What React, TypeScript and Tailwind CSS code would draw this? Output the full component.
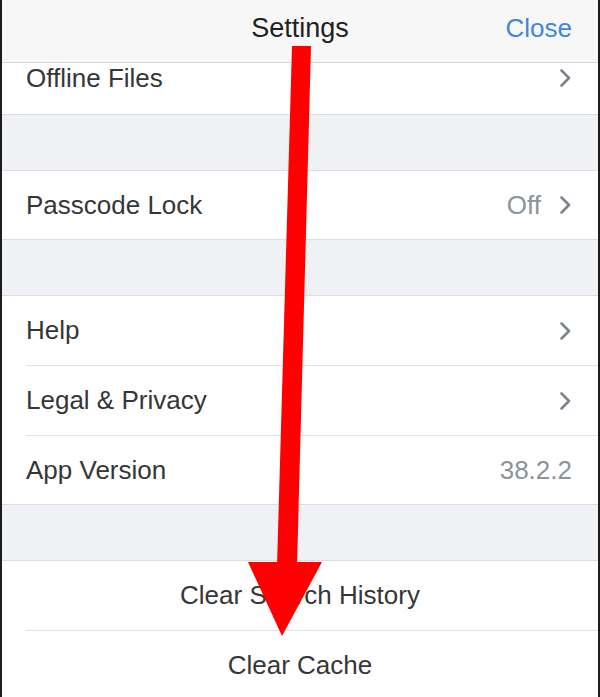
import React from 'react'

const font = { fontFamily: '"Liberation Sans", Arial, sans-serif' }

function Chevron() {
  return (
    <svg width="13" height="20" viewBox="0 0 13 20" className="shrink-0">
      <polyline points="2.5,2.5 10,10 2.5,17.5" fill="none" stroke="#7b838d" strokeWidth="2.6" strokeLinecap="round" strokeLinejoin="round" />
    </svg>
  )
}

function Row({ label, value, chevron, last }: { label: string; value?: string; chevron?: boolean; last?: boolean }) {
  return (
    <div className="bg-white pl-[24px]">
      <div className={`flex items-center pr-[26px] ${last ? 'h-[68px]' : 'h-[70px] border-b border-[#e2e3e5]'}`}>
        <span className="flex-1 text-[26px] text-[#363636]">{label}</span>
        {value && <span className={`text-[26px] text-[#8b939c] ${chevron ? 'mr-[18px]' : ''}`}>{value}</span>}
        {chevron && <Chevron />}
      </div>
    </div>
  )
}

function Gap() {
  return <div className="h-[57px] border-y border-[#dcdde0] bg-[#eff1f4]" />
}

export default function App() {
  return (
    <div className="relative h-[697px] w-[600px] overflow-hidden border-x-2 border-[#1c1c1c] bg-white" style={font}>
      {/* nav bar */}
      <div className="relative flex h-[63px] items-start justify-center border-b border-[#d6d7d9] bg-[#f7f7f7] pt-[8px]">
        <span className="text-[27px] font-medium text-[#1f1f1f]">Settings</span>
        <span className="absolute right-[26px] top-[9px] text-[26px] text-[#3f86e0]">Close</span>
      </div>

      {/* scrolled top row */}
      <div className="flex h-[51px] items-start bg-white pl-[24px] pr-[26px]">
        <span className="-mt-[4px] flex-1 text-[26px] text-[#363636]">Offline Files</span>
        <div className="pt-[5px]"><Chevron /></div>
      </div>

      <Gap />
      <Row label="Passcode Lock" value="Off" chevron last />
      <Gap />
      <Row label="Help" chevron />
      <Row label="Legal & Privacy" chevron />
      <Row label="App Version" value="38.2.2" last />
      <Gap />

      <div className="bg-white pl-[24px]">
        <div className="flex h-[70px] items-center justify-center border-b border-[#e2e3e5] text-[26px] text-[#363636]">
          <span className="-ml-[24px]">Clear Search History</span>
        </div>
        <div className="flex h-[69px] items-center justify-center text-[26px] text-[#363636]">
          <span className="-ml-[24px]">Clear Cache</span>
        </div>
      </div>

      {/* red arrow annotation */}
      <svg className="pointer-events-none absolute left-[-2px] top-0" width="600" height="697" viewBox="0 0 600 697">
        <polygon points="292,46 311,46 297,566 277,566" fill="#ff0000" />
        <polygon points="248,562 322,562 282,636" fill="#ff0000" />
      </svg>
    </div>
  )
}
